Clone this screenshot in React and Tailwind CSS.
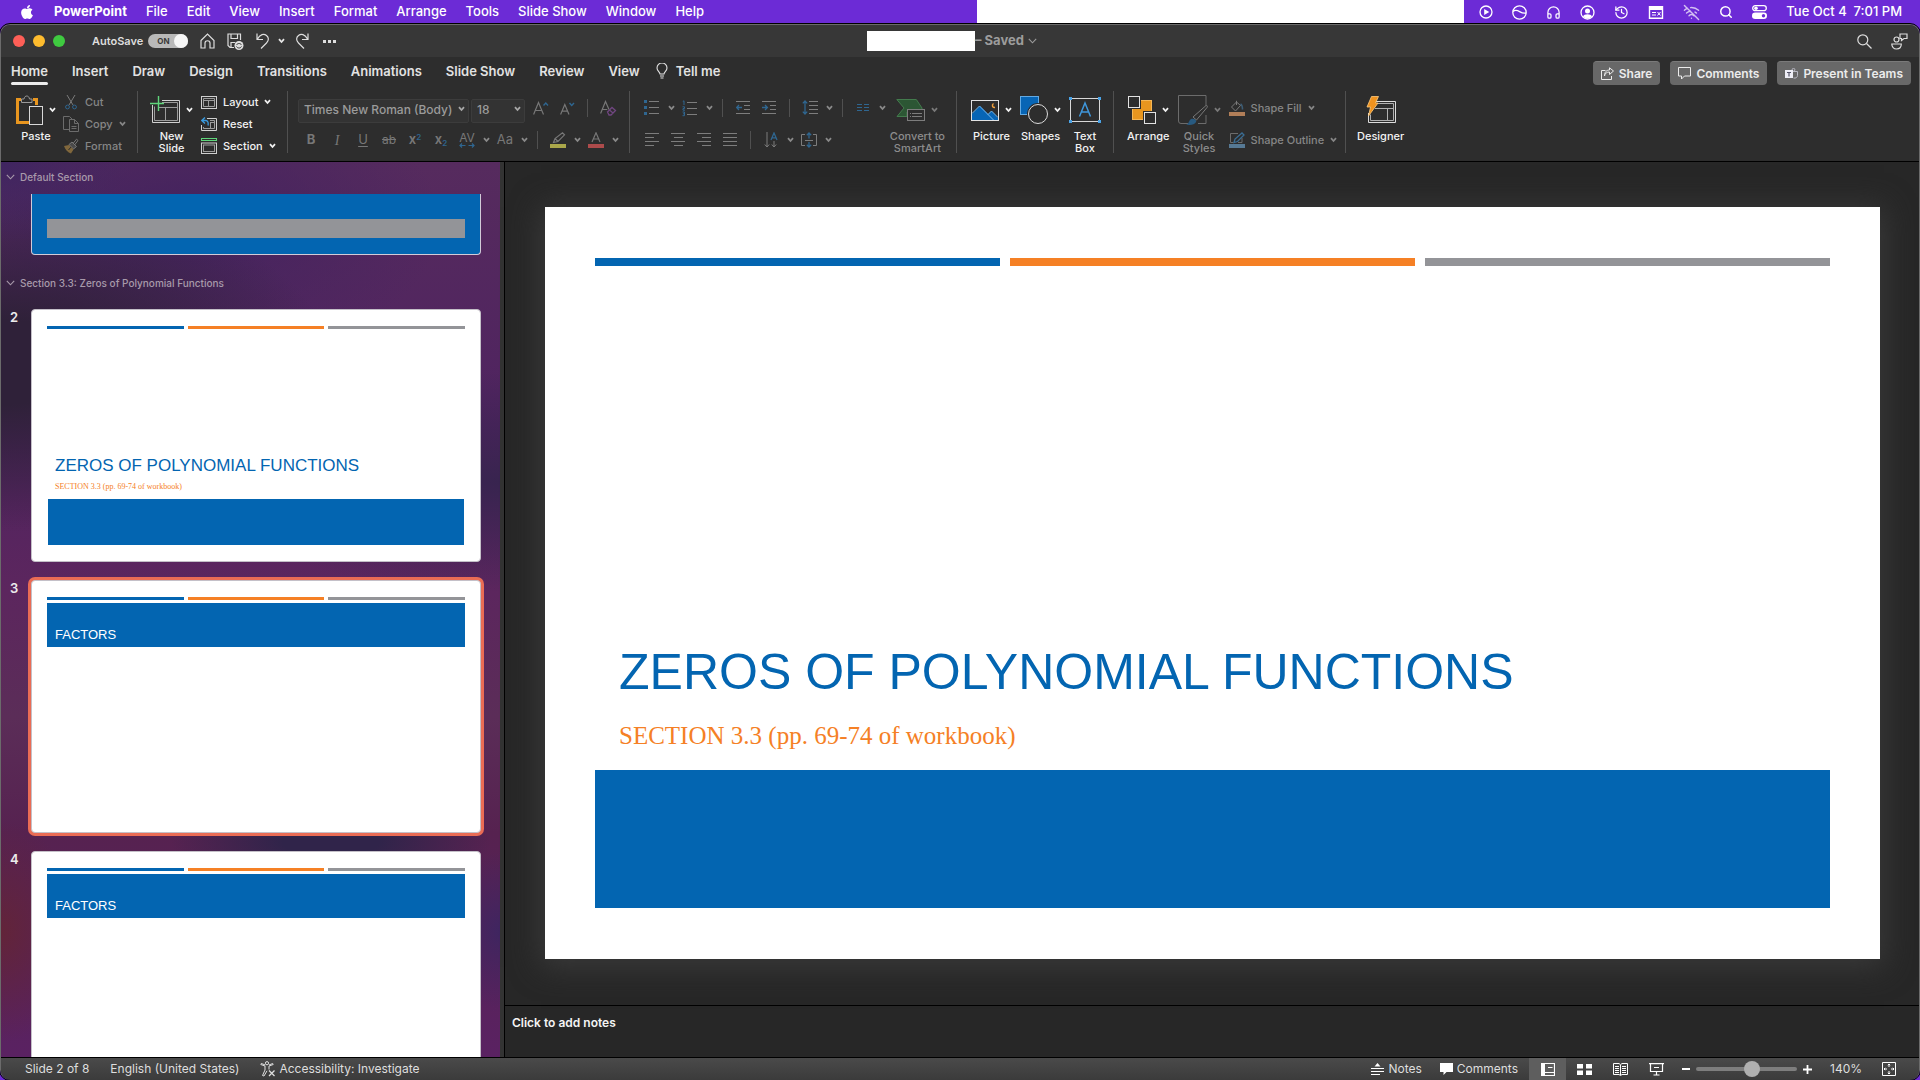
import React, { useState } from 'react';
import { FaApple } from 'react-icons/fa';
import { Headphones, History, Search, WifiOff, CircleUserRound } from 'lucide-react';

const menus = ['File', 'Edit', 'View', 'Insert', 'Format', 'Arrange', 'Tools', 'Slide Show', 'Window', 'Help'];
const tabs = ['Home', 'Insert', 'Draw', 'Design', 'Transitions', 'Animations', 'Slide Show', 'Review', 'View'];

const thumbs = [
  { number: 2, kind: 'title' },
  { number: 3, kind: 'content' },
  { number: 4, kind: 'content' },
];

/* ---------- small helpers ---------- */

const Icon = ({ w, h, children, className = '' }) => (
  <svg width={w} height={h} viewBox={`0 0 ${w} ${h}`} fill="none" className={`shrink-0 ${className}`} aria-hidden="true">
    {children}
  </svg>
);

const Chevron = ({ className = 'text-[#e6e6e6]' }) => (
  <Icon w={7} h={6} className={className}>
    <path d="M1 1.2 3.5 4 6 1.2" stroke="currentColor" strokeWidth="1.8" />
  </Icon>
);

const ThinChevron = ({ className = '' }) => (
  <Icon w={9} h={6} className={className}>
    <path d="M.8.8 4.5 4.8 8.2.8" stroke="currentColor" strokeWidth="1.1" />
  </Icon>
);

const GroupLine = () => <div className="w-px h-[62px] bg-[#505050] shrink-0" />;
const ShortLine = () => <div className="w-px h-[18px] bg-[#505050] mx-[7px] shrink-0" />;

const ToolButton = ({ label, children }) => (
  <button aria-label={label} className="w-[26px] h-6 flex items-center justify-center text-[#777777] shrink-0">
    {children}
  </button>
);

const DropArrow = ({ label }) => (
  <button aria-label={label} className="w-3 h-6 flex items-center justify-center shrink-0">
    <Chevron className="text-[#8a8a8a]" />
  </button>
);

const BigButton = ({ icon, lines, arrow = true, disabled = false }) => (
  <button className={`flex flex-col items-center mt-[3px] shrink-0 ${disabled ? 'text-[#8c8c8c]' : 'text-[#f2f2f2]'}`}>
    <span className="h-8 flex items-center gap-1.5">
      {icon}
      {arrow && <Chevron className={disabled ? 'text-[#7a7a7a]' : 'text-[#f2f2f2]'} />}
    </span>
    <span className="mt-1 text-[11px] leading-[12px] font-medium">
      {lines.map((line) => (
        <span key={line} className="block whitespace-nowrap">{line}</span>
      ))}
    </span>
  </button>
);

const SmallButton = ({ icon, label, arrow = false, disabled = false, tall = false }) => (
  <button
    className={`flex items-center gap-[6px] text-[11px] font-medium whitespace-nowrap ${tall ? 'h-6' : 'h-[22px]'} ${disabled ? 'text-[#868686]' : 'text-[#f2f2f2]'}`}
  >
    {icon}
    {label}
    {arrow && <Chevron className={disabled ? 'text-[#868686]' : 'text-[#f2f2f2]'} />}
  </button>
);

/* ---------- ribbon icons ---------- */

const PasteIcon = () => (
  <Icon w={27} h={30}>
    <path d="M5 4.5H1.5v23H13M17 4.5h3.500V10" stroke="#e8961f" strokeWidth="3" />
    <path d="M5.500 7.500v-3.500h2.500c.5-4 5-4 5.500 0h2.500v3.500z" stroke="#9a9a9a" fill="#2d2d2d" />
    <rect x="13.500" y="11.500" width="13" height="18" fill="#2d2d2d" stroke="#d8d8d8" />
  </Icon>
);

const CutIcon = () => (
  <Icon w={16} h={16}>
    <path d="M4 1l6 10M12 1 6 11" stroke="#7a7a7a" />
    <circle cx="4.500" cy="13" r="1.900" stroke="#2f6690" />
    <circle cx="11.500" cy="13" r="1.900" stroke="#2f6690" />
  </Icon>
);

const CopyIcon = () => (
  <Icon w={16} h={16}>
    <path d="M6 13.500H.5V.5h6l3 3" stroke="#6c6c6c" />
    <path d="M6.500 3.500h5l4 4v8h-9zM11.500 3.500v4h4M8.500 10.500h5M8.500 12.500h5" stroke="#6c6c6c" />
  </Icon>
);

const BrushIcon = () => (
  <Icon w={16} h={16}>
    <path d="M10 5.500 13.500 1.200l1.500 1.300-3.500 4.500" stroke="#777777" />
    <path d="M6 6.500 9 4l4.500 4.500-3 2.500z" fill="#4a4a4a" stroke="#777777" />
    <path d="M1 8l5-1 4.500 4.500L8 15.500C5 14.500 2 11.500 1 8z" fill="#80673c" />
    <path d="M5.500 12l2.500-3" stroke="#2d2d2d" />
  </Icon>
);

const NewSlideIcon = () => (
  <Icon w={30} h={28}>
    <path d="M2.500 9v17.500h27v-22H12" stroke="#d0d0d0" />
    <path d="M4.500 24.500v-14M4.500 24.500h23v-18H12M9 11.500h18.500M15.500 11.500v13" stroke="#9c9c9c" />
    <path d="M8.500 0v15M0 7.500h14" stroke="#5fd67b" strokeWidth="1.400" />
  </Icon>
);

const LayoutIcon = () => (
  <Icon w={16} h={13}>
    <rect x=".5" y=".5" width="15" height="12" stroke="#d0d0d0" />
    <path d="M2.500 2.500h11v8h-11zM2.500 4.500h11M7.500 4.500v6" stroke="#9c9c9c" />
  </Icon>
);

const ResetIcon = () => (
  <Icon w={16} h={14}>
    <path d="M6 1.500h9.500v12H.5V8" stroke="#d0d0d0" />
    <path d="M9 3.500h4.500v8h-11V10M9 5.500h4M9.500 5.500v6" stroke="#9c9c9c" />
    <path d="M4 .5.8 3.500 4 6.500M1 3.500h3.500c2.500 0 3 2.500 2.500 5" stroke="#3a9ade" strokeWidth="1.300" />
  </Icon>
);

const SectionIcon = () => (
  <Icon w={16} h={16}>
    <rect x=".5" y=".5" width="15" height="2" stroke="#5fd67b" />
    <rect x=".5" y="5" width="15" height="10.500" stroke="#d0d0d0" />
    <rect x="2.500" y="7" width="11" height="6.500" stroke="#9c9c9c" />
  </Icon>
);

const LineIcon = ({ rows }) => (
  <Icon w={15} h={14}>
    {rows.map(([x1, x2], i) => (
      <path key={i} d={`M${x1} ${i * 4 + 0.5}H${x2}`} stroke="#7d7d7d" />
    ))}
  </Icon>
);

const BulletsIcon = () => (
  <Icon w={16} h={16}>
    <path d="M0 0h3v3H0zM0 6h3v3H0zM0 12h3v3H0z" fill="#2f6690" />
    <path d="M5 1.500h10M5 7.500h10M5 13.500h10" stroke="#7d7d7d" />
  </Icon>
);

const NumbersIcon = () => (
  <Icon w={16} h={17}>
    <path d="M.8 1.500 2 .8V5M.5 6.800h2v1.700h-1.500v1.700h2M.5 12h2v3.700H.5M1 13.800h1.500" stroke="#2f6690" />
    <path d="M5 2.500h10M5 8.500h10M5 14.500h10" stroke="#7d7d7d" />
  </Icon>
);

const IndentIcon = ({ out }) => (
  <Icon w={15} h={14}>
    <path d="M0 .5h14M8 4.500h6M8 8.500h6M0 12.500h14" stroke="#7d7d7d" />
    <path d={out ? 'M6 6.500H.8M3 4 .6 6.500 3 9' : 'M0 6.500h5.200M3 4l2.400 2.500L3 9'} stroke="#2f6690" strokeWidth="1.300" />
  </Icon>
);

const SpacingIcon = () => (
  <Icon w={17} h={16}>
    <path d="M3 1v13M.8 3.400 3 1l2.200 2.400M.8 11.600 3 14l2.200-2.400" stroke="#2f6690" strokeWidth="1.300" />
    <path d="M7 1.500h9M7 5.500h9M7 9.500h9M7 13.500h9" stroke="#7d7d7d" />
  </Icon>
);

const ColumnsIcon = () => (
  <Icon w={13} h={8}>
    <path d="M0 .5h5M0 3.500h5M0 6.500h5M7 .5h5M7 3.500h5M7 6.500h5" stroke="#2f6690" />
  </Icon>
);

const DirectionIcon = () => (
  <Icon w={14} h={16}>
    <path d="M3 0v15M.8 12.500 3 15l2.200-2.500M10 9v6M7.800 12.500 10 15l2.200-2.500" stroke="#7d7d7d" />
    <path d="M7 8l3-7 3 7M8 5.800h4" stroke="#2f6690" strokeWidth="1.300" />
  </Icon>
);

const AlignTextIcon = () => (
  <Icon w={16} h={16}>
    <path d="M4 2.500H.5v11H4M12 2.500h3.500v11H12M4 8.500h8" stroke="#7d7d7d" />
    <path d="M8 1v5.500M5.800 3.200 8 1l2.200 2.200M8 15V10M5.800 12.800 8 15l2.200-2.200" stroke="#2f6690" strokeWidth="1.300" />
  </Icon>
);

const SmartArtIcon = () => (
  <Icon w={29} h={23}>
    <path d="M.8.5h19.500L26 9v4H11v4.500H1L8 9z" fill="#2c5634" stroke="#437b4d" />
    <rect x="11.500" y="10.500" width="17" height="11" fill="#2d2d2d" stroke="#7d7d7d" />
    <path d="M14 14.500h1M16 14.500h10M14 17.500h1M16 17.500h10" stroke="#7d7d7d" />
  </Icon>
);

const PictureIcon = () => (
  <Icon w={28} h={21}>
    <path d="M1 14 9 6l14 14H1z" fill="#0765b5" />
    <path d="M17 14.500 20.500 11l6.500 7v2h-5z" fill="#0765b5" />
    <path d="M1 13.500 8.500 6l14 14M17 14.500l3.500-3.500 6.500 6.500" stroke="#77b9ee" />
    <path d="M22.500 3.500c-2 1.500-1 4.500 1.500 3.800" stroke="#f0a03c" strokeWidth="1.500" />
    <rect x=".5" y=".5" width="27" height="20" stroke="#e2e2e2" />
  </Icon>
);

const ShapesIcon = () => (
  <Icon w={28} h={28}>
    <rect x=".5" y=".5" width="18" height="18" fill="#0765b5" stroke="#62a9e2" />
    <circle cx="18" cy="18" r="11" fill="#2d2d2d" />
    <circle cx="18" cy="18" r="9.500" stroke="#dcdcdc" fill="#2d2d2d" />
  </Icon>
);

const TextBoxIcon = () => (
  <Icon w={32} h={26}>
    <rect x="1.500" y="1.500" width="29" height="23" stroke="#d8d8d8" />
    <path d="M0 0h3v3H0zM29 0h3v3h-3zM0 23h3v3H0zM29 23h3v3h-3z" fill="#4aa3e6" />
    <path d="M10.500 19.500 16 6l5.500 13.500M12.500 15h7" stroke="#3f97dc" strokeWidth="1.500" />
  </Icon>
);

const ArrangeIcon = () => (
  <Icon w={28} h={28}>
    <rect x="4.500" y="4.500" width="19" height="19" fill="#e8961f" stroke="#f5b757" />
    <rect x="-1" y="-1" width="14" height="14" fill="#2d2d2d" />
    <rect x=".5" y=".5" width="11" height="11" stroke="#e2e2e2" />
    <rect x="15" y="15" width="13" height="13" fill="#2d2d2d" />
    <rect x="16.500" y="16.500" width="11" height="11" stroke="#e2e2e2" />
  </Icon>
);

const QuickStylesIcon = () => (
  <Icon w={30} h={30}>
    <path d="M10 28.500H3a2.500 2.500 0 0 1-2.500-2.500V.5H28v12M28 20v8.500h-8" stroke="#6c6c6c" />
    <path d="M15 22 27.500 11c1.500-1 2.500 0 1.500 1.500L18.500 25z" fill="#2d2d2d" stroke="#7a7a7a" />
    <path d="M8 29.500c3 0 2.500-4 5-5.500 3-1 6 1 5 3-1 2.500-6 3.500-10 2.500z" fill="#285a80" />
  </Icon>
);

const ShapeFillIcon = () => (
  <Icon w={16} h={16}>
    <path d="M7.500 2 2.500 7l4 4 5-5.500zM7.500 5V.8" stroke="#7a7a7a" />
    <path d="M11.500 4c2 1 2 3 2 5.500" stroke="#3c5c74" strokeWidth="1.600" />
    <path d="M0 12h16v4H0z" fill="#b17e58" />
  </Icon>
);

const ShapeOutlineIcon = () => (
  <Icon w={16} h={16}>
    <path d="M9 1.500H1.500v9h3M13 6v4.500H9" stroke="#6c6c6c" />
    <path d="M5 10.500 6 7l7-6 2 2-6.500 6.500z" stroke="#3b6d93" strokeWidth="1.300" />
    <path d="M0 12h16v4H0z" fill="#567994" />
  </Icon>
);

const DesignerIcon = () => (
  <Icon w={30} h={28}>
    <path d="M10 5.500h19.500v21h-27V17" stroke="#dcdcdc" />
    <path d="M11 7.500h16.500v17h-23v-6M9 12.500h18.500M21.500 12.500v12" stroke="#b0b0b0" />
    <path d="M5.500.5h7L9.500 7H12L2.500 20l2-9H1z" fill="#f0931f" stroke="#ffcd80" strokeWidth=".8" />
  </Icon>
);

/* ---------- bars at the top of the window ---------- */

const MenuBar = () => (
  <nav className="h-6 flex items-center bg-[#6c2bd6] text-white text-[13px] font-medium shrink-0">
    <div className="flex items-center gap-[19px] pl-[19px] whitespace-nowrap">
      <button aria-label="Apple menu"><FaApple size={16} /></button>
      <button className="font-bold">PowerPoint</button>
      {menus.map((m) => (
        <button key={m}>{m}</button>
      ))}
    </div>
    <div className="ml-auto h-[23px] w-[487px] bg-white self-start shrink" />
    <div className="flex items-center gap-[19px] pl-[15px] pr-[18px] shrink-0 whitespace-nowrap">
      <Icon w={14} h={14}>
        <circle cx="7" cy="7" r="6" stroke="#fff" strokeWidth="1.300" />
        <path d="M5.200 4v6l5-3z" fill="#fff" />
      </Icon>
      <Icon w={15} h={15}>
        <circle cx="7.500" cy="7.500" r="6.700" stroke="#fff" strokeWidth="1.300" />
        <path d="M1 6.500c5-4 7 3 13 1.500" stroke="#fff" strokeWidth="1.300" />
      </Icon>
      <Headphones size={15} />
      <Icon w={15} h={15}>
        <circle cx="7.500" cy="7.500" r="6.500" stroke="#fff" strokeWidth="1.300" />
        <circle cx="7.500" cy="6" r="2.500" fill="#fff" />
        <path d="M3 11.500c1-3 8-3 9 0-2 2.600-7 2.600-9 0z" fill="#fff" />
      </Icon>
      <History size={15} />
      <Icon w={16} h={13}>
        <path d="M1.500.8h13v11.400h-13z" stroke="#fff" strokeWidth="1.400" />
        <path d="M1 1h14v3H1z" fill="#fff" />
        <path d="M4 6.500h4M4 9h4M9.500 6l3 3.500M12.500 6l-3 3.500" stroke="#fff" />
      </Icon>
      <WifiOff size={17} className="opacity-70" />
      <Search size={14} strokeWidth={2.5} />
      <Icon w={15} h={14}>
        <rect x=".7" y=".7" width="13.600" height="5" rx="2.500" stroke="#fff" strokeWidth="1.300" />
        <circle cx="4" cy="3.200" r="1.800" fill="#fff" />
        <rect y="7.500" width="15" height="6.500" rx="3.200" fill="#fff" />
        <circle cx="11.500" cy="10.700" r="1.700" fill="#6c2bd6" />
      </Icon>
      <time className="whitespace-pre">Tue Oct 4  7:01 PM</time>
    </div>
  </nav>
);

const TitleBar = () => {
  const [autoSave, setAutoSave] = useState(true);

  return (
    <header className="h-8 grid grid-cols-[1fr_auto_1fr] items-center bg-[#373737] text-[#dedede] shrink-0">
      <div className="flex items-center">
        <div className="flex gap-2 pl-3">
          <button aria-label="Close" className="size-3 rounded-full bg-[#fe5f57]" />
          <button aria-label="Minimize" className="size-3 rounded-full bg-[#febc2e]" />
          <button aria-label="Zoom" className="size-3 rounded-full bg-[#3fca40]" />
        </div>
        <label className="flex items-center gap-[5px] ml-[27px] text-[11px] font-semibold">
          AutoSave
          <span className="relative w-10 h-[14px] rounded-full bg-[#b9b9b9] flex items-center pl-[9px]">
            <input type="checkbox" checked={autoSave} onChange={(e) => setAutoSave(e.target.checked)} className="sr-only" />
            <span className="text-[8px] leading-[14px] font-bold text-[#3a3a3a]">ON</span>
            <span className="absolute right-0 top-0 size-[14px] rounded-full bg-[#f6f6f6]" />
          </span>
        </label>
        <div className="flex items-center gap-3 ml-3">
          <button aria-label="Home">
            <Icon w={15} h={16}>
              <path d="M1 7.500 7.500 1 14 7.500v7.500h-4V10c0-3-5-3-5 0v5H1z" stroke="currentColor" strokeWidth="1.200" />
            </Icon>
          </button>
          <button aria-label="Save">
            <Icon w={17} h={17}>
              <path d="M7 14.500H3L1 12.500V1h12.500v6M4 1v4.500h6.500V1M4 14.500V9.500h4" stroke="currentColor" strokeWidth="1.200" />
              <circle cx="12" cy="12.500" r="4.500" fill="currentColor" />
              <path d="M9.500 12c1-2 4-2 5 0M14.500 13.500c-1 2-4 2-5 0" stroke="#373737" />
            </Icon>
          </button>
          <button aria-label="Undo">
            <Icon w={14} h={16}>
              <path d="M1 .5v6h6M1.500 6C4 1 8 .5 10.500 2.500s2.500 5 0 7.500L5 15.500" stroke="currentColor" strokeWidth="1.200" />
            </Icon>
          </button>
          <button aria-label="Undo history" className="-ml-1 -mr-0.5"><Chevron /></button>
          <button aria-label="Redo">
            <Icon w={14} h={16}>
              <path d="M13 .5v6H7M12.500 6C10 1 6 .5 3.500 2.500s-2.500 5 0 7.500L9 15.500" stroke="currentColor" strokeWidth="1.200" />
            </Icon>
          </button>
          <button aria-label="More" className="ml-0.5">
            <Icon w={13} h={3}>
              <path d="M0 0h3v3H0zM5 0h3v3H5zM10 0h3v3h-3z" fill="currentColor" />
            </Icon>
          </button>
        </div>
      </div>
      <div className="flex items-center h-5 pr-4">
        <div className="w-[108px] h-5 bg-white" />
        <button className="flex items-center gap-1 text-[13px] font-bold text-[#9c9c9c]">
          – Saved
          <ThinChevron />
        </button>
      </div>
      <div className="flex items-center justify-end gap-[19px] pr-[11px]">
        <button aria-label="Search">
          <Icon w={15} h={15}>
            <circle cx="5.800" cy="5.800" r="5" stroke="currentColor" strokeWidth="1.200" />
            <path d="m9.500 9.500 5 5" stroke="currentColor" strokeWidth="1.200" />
          </Icon>
        </button>
        <button aria-label="Account">
          <Icon w={17} h={17}>
            <circle cx="5.500" cy="6.500" r="2.500" stroke="currentColor" strokeWidth="1.200" />
            <path d="M.8 11h9.500c0 3-2 5-4.800 5S.8 14 .8 11zM9 1h7v4.500h-3l-2.500 2V5.500H9z" stroke="currentColor" strokeWidth="1.200" />
          </Icon>
        </button>
      </div>
    </header>
  );
};

const HeaderButton = ({ icon, children }) => (
  <button className="h-6 px-2 flex items-center gap-[5px] rounded bg-[#686868] border-t border-[#7a7a7a] text-[12px] font-semibold text-[#ececec] whitespace-nowrap">
    {icon}
    {children}
  </button>
);

const TabBar = () => (
  <div className="h-[34px] flex justify-between shrink-0 text-[#e2e2e2]">
    <div className="flex gap-6 pl-[10px] text-[13px] font-semibold whitespace-nowrap">
      {tabs.map((t, i) => (
        <button key={t} className="flex flex-col items-center pt-1">
          <span className="leading-5">{t}</span>
          {i === 0 && <span className="mt-px h-[3px] w-full rounded-full bg-[#ececec]" />}
        </button>
      ))}
      <button className="flex gap-2 pt-1 leading-5 -ml-2">
        <Icon w={12} h={16} className="mt-0.5">
          <path d="M4 11C4 9 1 8 1 5a5 5 0 0 1 10 0c0 3-3 4-3 6zM4 13h4M4.500 15h3" stroke="currentColor" strokeWidth="1.100" />
        </Icon>
        Tell me
      </button>
    </div>
    <div className="flex gap-2.5 pt-1 pr-2">
      <HeaderButton
        icon={
          <Icon w={13} h={13}>
            <path d="M4.500 3.500h-4v9h10V9M3.500 9C4 6 6 5 8.500 5V7.500L12.500 4 8.500.8V3C5.500 3 3.500 5 3.500 9z" stroke="currentColor" />
          </Icon>
        }
      >
        Share
      </HeaderButton>
      <HeaderButton
        icon={
          <Icon w={13} h={13}>
            <path d="M.5.5h12v8.500h-6L3.500 12V9h-3z" stroke="currentColor" />
          </Icon>
        }
      >
        Comments
      </HeaderButton>
      <HeaderButton
        icon={
          <Icon w={13} h={12}>
            <path d="M8 3.500h4.500v4c0 2-2 3-4 2.500" stroke="#b9b9c4" />
            <circle cx="8.500" cy="1.800" r="1.400" stroke="#b9b9c4" />
            <rect y="2" width="8" height="8" fill="#eeeef6" />
            <path d="M2 4.500h4M4 4.500v4" stroke="#55556a" strokeWidth="1.200" />
          </Icon>
        }
      >
        Present in Teams
      </HeaderButton>
    </div>
  </div>
);

const FontSelect = ({ label, value, className }) => (
  <div className={`relative h-6 ${className}`}>
    <select
      aria-label={label}
      defaultValue={value}
      className="w-full h-full appearance-none rounded-[2px] bg-[#333333] border border-[#3c3c3c] pl-[5px] pb-0.5 text-[12px] font-medium text-[#9b9b9b]"
    >
      <option>{value}</option>
    </select>
    <Chevron className="absolute right-1 top-[10px] text-[#a8a8a8]" />
  </div>
);

const FontGroup = () => (
  <div className="w-[341px] shrink-0 pl-[10px] pt-[5px] flex flex-col gap-2">
    <div className="flex items-center">
      <FontSelect label="Font" value="Times New Roman (Body)" className="w-[171px]" />
      <FontSelect label="Font size" value="18" className="w-[54px] ml-[2px] mr-[3px]" />
      <ToolButton label="Increase font size">
        <Icon w={16} h={15}>
          <path d="M.6 13.500 5.500 1.500l5 12M2.300 9.500h6.500" stroke="currentColor" strokeWidth="1.200" />
          <path d="M10.500 4.500 12.800 2 15 4.500" stroke="#2f6690" strokeWidth="1.400" />
        </Icon>
      </ToolButton>
      <ToolButton label="Decrease font size">
        <Icon w={15} h={15}>
          <path d="M.6 13.500 4.800 3.500l4.200 10M2 10.200h5.500" stroke="currentColor" strokeWidth="1.200" />
          <path d="M9.500 2l2.200 2.500L14 2" stroke="#2f6690" strokeWidth="1.400" />
        </Icon>
      </ToolButton>
      <ShortLine />
      <ToolButton label="Clear formatting">
        <Icon w={17} h={16}>
          <path d="M.6 13.500 5.500 1.500l3.500 8M2.300 9.500h5" stroke="currentColor" strokeWidth="1.200" />
          <path d="m7.500 12 4.500-4.500 3.500 3-4.500 4.500h-2zM9.500 10l3.500 3" stroke="#704680" strokeWidth="1.300" />
        </Icon>
      </ToolButton>
    </div>
    <div className="flex items-center">
      <ToolButton label="Bold"><span className="text-[13px] font-bold">B</span></ToolButton>
      <ToolButton label="Italic"><span className="text-[14px] italic font-['Liberation_Serif',serif]">I</span></ToolButton>
      <ToolButton label="Underline"><span className="text-[13px] underline underline-offset-2">U</span></ToolButton>
      <ToolButton label="Strikethrough"><span className="text-[12px] line-through">ab</span></ToolButton>
      <ToolButton label="Superscript">
        <span className="text-[13px] font-semibold">x<sup className="text-[8px] text-[#2f6690]">2</sup></span>
      </ToolButton>
      <ToolButton label="Subscript">
        <span className="text-[13px] font-semibold">x<sub className="text-[8px] text-[#2f6690]">2</sub></span>
      </ToolButton>
      <ToolButton label="Character spacing">
        <span className="flex flex-col items-center">
          <span className="text-[12px] leading-[11px]">AV</span>
          <Icon w={16} h={5}>
            <path d="M6.500 2.500H1M3 .5l-2 2 2 2M9.500 2.500H15M13 .5l2 2-2 2" stroke="#2f6690" strokeWidth="1.200" />
          </Icon>
        </span>
      </ToolButton>
      <DropArrow label="Character spacing options" />
      <ToolButton label="Change case"><span className="text-[13px]">Aa</span></ToolButton>
      <DropArrow label="Case options" />
      <ShortLine />
      <ToolButton label="Highlight">
        <Icon w={16} h={16}>
          <path d="M3.500 10.500 5 6.500 12.500.8l2 2L8 9.500zM5 6.500 8 9.500" stroke="currentColor" strokeWidth="1.200" />
          <path d="M0 12h16v4H0z" fill="#aaa74a" />
        </Icon>
      </ToolButton>
      <DropArrow label="Highlight colours" />
      <ToolButton label="Font colour">
        <Icon w={16} h={16}>
          <path d="M4 10 8 .8l4 9.200M5.500 7h5" stroke="currentColor" strokeWidth="1.200" />
          <path d="M0 12h16v4H0z" fill="#ad4b4b" />
        </Icon>
      </ToolButton>
      <DropArrow label="Font colours" />
    </div>
  </div>
);

const ParagraphGroup = () => (
  <div className="w-[326px] shrink-0 pl-[9px] flex justify-between pr-[11px]">
    <div className="pt-[5px] flex flex-col gap-2">
      <div className="flex items-center">
        <ToolButton label="Bullets"><BulletsIcon /></ToolButton>
        <DropArrow label="Bullet styles" />
        <ToolButton label="Numbering"><NumbersIcon /></ToolButton>
        <DropArrow label="Numbering styles" />
        <ShortLine />
        <ToolButton label="Decrease indent"><IndentIcon out /></ToolButton>
        <ToolButton label="Increase indent"><IndentIcon /></ToolButton>
        <ShortLine />
        <ToolButton label="Line spacing"><SpacingIcon /></ToolButton>
        <DropArrow label="Line spacing options" />
        <ShortLine />
        <ToolButton label="Columns"><ColumnsIcon /></ToolButton>
        <DropArrow label="Column options" />
      </div>
      <div className="flex items-center">
        <ToolButton label="Align left"><LineIcon rows={[[0, 14], [0, 9], [0, 14], [0, 9]]} /></ToolButton>
        <ToolButton label="Center"><LineIcon rows={[[0, 14], [3, 12], [0, 14], [3, 12]]} /></ToolButton>
        <ToolButton label="Align right"><LineIcon rows={[[0, 14], [5, 14], [0, 14], [5, 14]]} /></ToolButton>
        <ToolButton label="Justify"><LineIcon rows={[[0, 14], [0, 14], [0, 14], [0, 14]]} /></ToolButton>
        <ShortLine />
        <ToolButton label="Text direction"><DirectionIcon /></ToolButton>
        <DropArrow label="Text direction options" />
        <ToolButton label="Align text"><AlignTextIcon /></ToolButton>
        <DropArrow label="Align text options" />
      </div>
    </div>
    <BigButton icon={<SmartArtIcon />} lines={['Convert to', 'SmartArt']} disabled />
  </div>
);

const Ribbon = () => (
  <div className="h-[70px] flex shrink-0">
    <div className="w-[136px] shrink-0 pl-[15px] flex gap-[7px]">
      <BigButton icon={<PasteIcon />} lines={['Paste']} />
      <div className="flex flex-col">
        <SmallButton icon={<CutIcon />} label="Cut" disabled />
        <SmallButton icon={<CopyIcon />} label="Copy" arrow disabled />
        <SmallButton icon={<BrushIcon />} label="Format" disabled />
      </div>
    </div>
    <GroupLine />
    <div className="w-[149px] shrink-0 pl-3 flex gap-2">
      <BigButton icon={<NewSlideIcon />} lines={['New', 'Slide']} />
      <div className="flex flex-col">
        <SmallButton icon={<LayoutIcon />} label="Layout" arrow />
        <SmallButton icon={<ResetIcon />} label="Reset" />
        <SmallButton icon={<SectionIcon />} label="Section" arrow />
      </div>
    </div>
    <GroupLine />
    <FontGroup />
    <GroupLine />
    <ParagraphGroup />
    <GroupLine />
    <div className="w-[156px] shrink-0 pl-[14px] flex gap-2">
      <BigButton icon={<PictureIcon />} lines={['Picture']} />
      <BigButton icon={<ShapesIcon />} lines={['Shapes']} />
      <BigButton icon={<TextBoxIcon />} lines={['Text', 'Box']} arrow={false} />
    </div>
    <GroupLine />
    <div className="w-[231px] shrink-0 pl-[13px] flex gap-2">
      <BigButton icon={<ArrangeIcon />} lines={['Arrange']} />
      <BigButton icon={<QuickStylesIcon />} lines={['Quick', 'Styles']} disabled />
      <div className="pt-[5px] flex flex-col gap-2">
        <SmallButton icon={<ShapeFillIcon />} label="Shape Fill" arrow disabled tall />
        <SmallButton icon={<ShapeOutlineIcon />} label="Shape Outline" arrow disabled tall />
      </div>
    </div>
    <GroupLine />
    <div className="pl-[11px] flex">
      <BigButton icon={<DesignerIcon />} lines={['Designer']} arrow={false} />
    </div>
  </div>
);

/* ---------- slides ---------- */

const AccentBars = ({ className }) => (
  <div className={`grid grid-cols-3 ${className}`}>
    <div className="bg-[#0365b1]" />
    <div className="bg-[#f58025]" />
    <div className="bg-[#939498]" />
  </div>
);

const Thumb = ({ slide, selected }) => (
  <div className="flex items-start">
    <span className="w-[30px] pl-[9px] text-[13px] leading-4 font-semibold text-[#ececec]">{slide.number}</span>
    <button
      className={`flex-1 aspect-[450/253] rounded-[4px] bg-white border border-[#c4c0c8] px-[15px] pt-4 flex flex-col text-left font-['Liberation_Sans',Arial,sans-serif] ${selected ? 'ring-3 ring-[#ea6c55]' : ''}`}
    >
      <AccentBars className="w-full h-[3px] gap-1 shrink-0" />
      {slide.kind === 'title' ? (
        <span className="w-full flex-1 flex flex-col justify-end pb-4">
          <span className="pl-2 text-[17px] leading-5 text-[#0365b1] whitespace-nowrap">ZEROS OF POLYNOMIAL FUNCTIONS</span>
          <span className="pl-2 mt-1.5 mb-[7px] text-[8px] leading-[10px] text-[#f58025] font-['Liberation_Serif',serif]">
            SECTION 3.3 (pp. 69-74 of workbook)
          </span>
          <span className="h-[46px] bg-[#0365b1] mx-px" />
        </span>
      ) : (
        <span className="mt-[3px] w-full h-11 shrink-0 bg-[#0365b1] flex items-end pl-2 pb-1 text-[13px] leading-4 text-white">
          FACTORS
        </span>
      )}
    </button>
  </div>
);

const SectionLabel = ({ children }) => (
  <button className="flex items-center gap-[5px] pl-[5px] h-4 text-[10px] font-medium text-[#a89aaa]">
    <ThinChevron />
    {children}
  </button>
);

const Sidebar = () => (
  <aside className="w-[499px] shrink-0 overflow-hidden pr-[19px] bg-[radial-gradient(130px_80px_at_0_0,#3f2560,transparent),radial-gradient(330px_170px_at_0_200px,#2f2139_25%,transparent),radial-gradient(260px_150px_at_180px_60px,#43235e,transparent),radial-gradient(300px_110px_at_100%_320px,#38244f,transparent),radial-gradient(160px_50px_at_330px_680px,#30244a_30%,transparent),radial-gradient(80px_110px_at_0_770px,#622439,transparent),radial-gradient(60px_80px_at_100%_770px,#3f2560,transparent),linear-gradient(#562b5e_0,#4f2360_30%,#5c265e_48%,#5b2d58_62%,#562250_75%,#5a2262_100%)]">
    <div className="pt-[7px]">
      <SectionLabel>Default Section</SectionLabel>
    </div>
    <div className="mt-[9px] ml-[30px] h-[61px] bg-[#0365b1] border border-t-0 border-[#d2cbd8] rounded-b-[4px] px-[15px] pt-[25px]">
      <div className="h-[19px] bg-[#939498]" />
    </div>
    <div className="pt-5 pb-[18px]">
      <SectionLabel>Section 3.3: Zeros of Polynomial Functions</SectionLabel>
    </div>
    <div className="flex flex-col gap-[18px]">
      {thumbs.map((slide) => (
        <Thumb key={slide.number} slide={slide} selected={slide.number === 3} />
      ))}
    </div>
  </aside>
);

const Editor = () => (
  <main className="flex-1 min-w-0 flex flex-col bg-[#272727] border-l border-black">
    <div className="flex-1 min-h-0 flex items-center pl-10 pr-[39px] pb-0.5">
      <section className="w-full aspect-[1335/752] bg-white px-[50px] py-[51px] flex flex-col shadow-[0_4px_28px_4px_#3a3a3a] font-['Liberation_Sans',Arial,sans-serif]">
        <AccentBars className="h-2 gap-2.5 shrink-0" />
        <div className="flex-1 flex flex-col justify-end pl-6">
          <h1 className="text-[50px] leading-[60px] text-[#0365b1] whitespace-nowrap">ZEROS OF POLYNOMIAL FUNCTIONS</h1>
          <p className="mt-5 mb-5 text-[25px] leading-7 text-[#f58025] font-['Liberation_Serif',serif]">SECTION 3.3 (pp. 69-74 of workbook)</p>
        </div>
        <div className="h-[138px] bg-[#0365b1] shrink-0" />
      </section>
    </div>
    <div className="h-[52px] shrink-0 border-t border-black px-[7px] pt-[9px]">
      <textarea
        aria-label="Notes"
        placeholder="Click to add notes"
        className="w-full h-9 resize-none outline-none bg-transparent text-[12px] leading-4 font-semibold text-white placeholder:text-[#f4f4f4]"
      />
    </div>
  </main>
);

/* ---------- status bar ---------- */

const StatusBar = () => (
  <footer className="h-[23px] shrink-0 flex items-center justify-between border-t border-black bg-linear-to-b from-[#4a4a4a] to-[#3b3b3b] text-[12px] text-[#dedede] whitespace-nowrap">
    <div className="flex items-center pl-6 gap-[21px]">
      <span>Slide 2 of 8</span>
      <button>English (United States)</button>
      <button className="flex items-center gap-[3px]">
        <Icon w={16} h={16}>
          <circle cx="7" cy="2.200" r="1.600" stroke="currentColor" />
          <path d="M.8 3.500 5 5v4l-2.500 5.500 1.500.5L7 9.800M13.200 3.500 9 5v3.500M.8 3.500l.5-1 4 1.500M13.200 3.500l-.5-1L9 4" stroke="currentColor" />
          <path d="m9 9.500 5.500 5.500M14.500 9.500 9 15" stroke="currentColor" strokeWidth="1.300" />
        </Icon>
        Accessibility: Investigate
      </button>
    </div>
    <div className="flex items-center h-full pr-[23px]">
      <button className="flex items-center gap-1 mr-[18px]">
        <Icon w={13} h={13}>
          <path d="M6.500 0 9.500 3.500h-6z" fill="#fff" />
          <path d="M0 5.500h13M0 8.500h13M0 11.500h9" stroke="#fff" />
        </Icon>
        Notes
      </button>
      <button className="flex items-center gap-1 mr-[11px]">
        <Icon w={13} h={12}>
          <path d="M0 0h13v9H6.500L3.500 12V9H0z" fill="#fff" />
        </Icon>
        Comments
      </button>
      <button aria-label="Normal view" className="w-[37px] h-full flex items-center justify-center bg-[#5e5e5e]">
        <Icon w={14} h={13}>
          <path d="M0 0h4v13H0z" fill="#fff" />
          <path d="M.5.5h13v12H.5zM4 9.500h9.500M7 4.500h4.500" stroke="#fff" strokeWidth="1.200" />
        </Icon>
      </button>
      <button aria-label="Slide sorter" className="w-9 flex justify-center">
        <Icon w={15} h={11}>
          <path d="M0 0h6v4.500H0zM9 0h6v4.500H9zM0 6.500h6V11H0zM9 6.500h6V11H9z" fill="#fff" />
        </Icon>
      </button>
      <button aria-label="Reading view" className="w-9 flex justify-center">
        <Icon w={15} h={13}>
          <path d="M.5.5h5.500l1.500 1.200L9 .5h5.500v11H9l-1.500 1-1.500-1H.5zM7.500 2v10M2 3.500h4M2 5.500h4M2 7.500h4M2 9.500h4M9 3.500h4M9 5.500h4M9 7.500h4M9 9.500h4" stroke="#fff" />
        </Icon>
      </button>
      <button aria-label="Slide show" className="w-9 flex justify-center">
        <Icon w={15} h={13}>
          <path d="M0 .7h15M1.500 1v7.500h12V1M5 4.500h5M7.500 8.500v3M4.500 12h6" stroke="#fff" strokeWidth="1.200" />
        </Icon>
      </button>
      <button aria-label="Zoom out" className="w-4 flex justify-end mr-1.5">
        <span className="w-2 h-0.5 bg-white" />
      </button>
      <input
        type="range"
        aria-label="Zoom"
        min="10"
        max="240"
        defaultValue="141"
        className="w-[101px] h-1 appearance-none rounded-full bg-[#7e7e7e] [&::-webkit-slider-thumb]:appearance-none [&::-webkit-slider-thumb]:size-4 [&::-webkit-slider-thumb]:rounded-full [&::-webkit-slider-thumb]:bg-[#b0b0b0]"
      />
      <button aria-label="Zoom in" className="ml-1.5">
        <Icon w={9} h={9}>
          <path d="M0 4.500h9M4.500 0v9" stroke="#fff" strokeWidth="1.800" />
        </Icon>
      </button>
      <button className="w-16 text-right pr-[14px] mr-1.5">140%</button>
      <button aria-label="Fit slide to window">
        <Icon w={14} h={14}>
          <path d="M.5.5h13v13H.5zM7 2v3M5.800 3.200 7 2l1.200 1.200M7 12V9M5.800 10.800 7 12l1.200-1.200M2 7h3M3.200 5.800 2 7l1.200 1.200M12 7H9M10.800 5.800 12 7l-1.200 1.200" stroke="#fff" />
        </Icon>
      </button>
    </div>
  </footer>
);

const App = () => (
  <div className="h-screen flex flex-col overflow-hidden bg-[#6c2bd6] font-['Inter','Liberation_Sans',sans-serif]">
    <MenuBar />
    <div className="flex-1 min-h-0 flex flex-col overflow-hidden rounded-[10px] bg-[#2d2d2d] border border-[#6b6b6b] border-b-0 outline outline-black">
      <TitleBar />
      <TabBar />
      <Ribbon />
      <div className="flex-1 min-h-0 flex border-t border-black">
        <Sidebar />
        <div className="w-1 shrink-0 bg-[#333333]" />
        <Editor />
      </div>
      <StatusBar />
    </div>
  </div>
);

export default App;
